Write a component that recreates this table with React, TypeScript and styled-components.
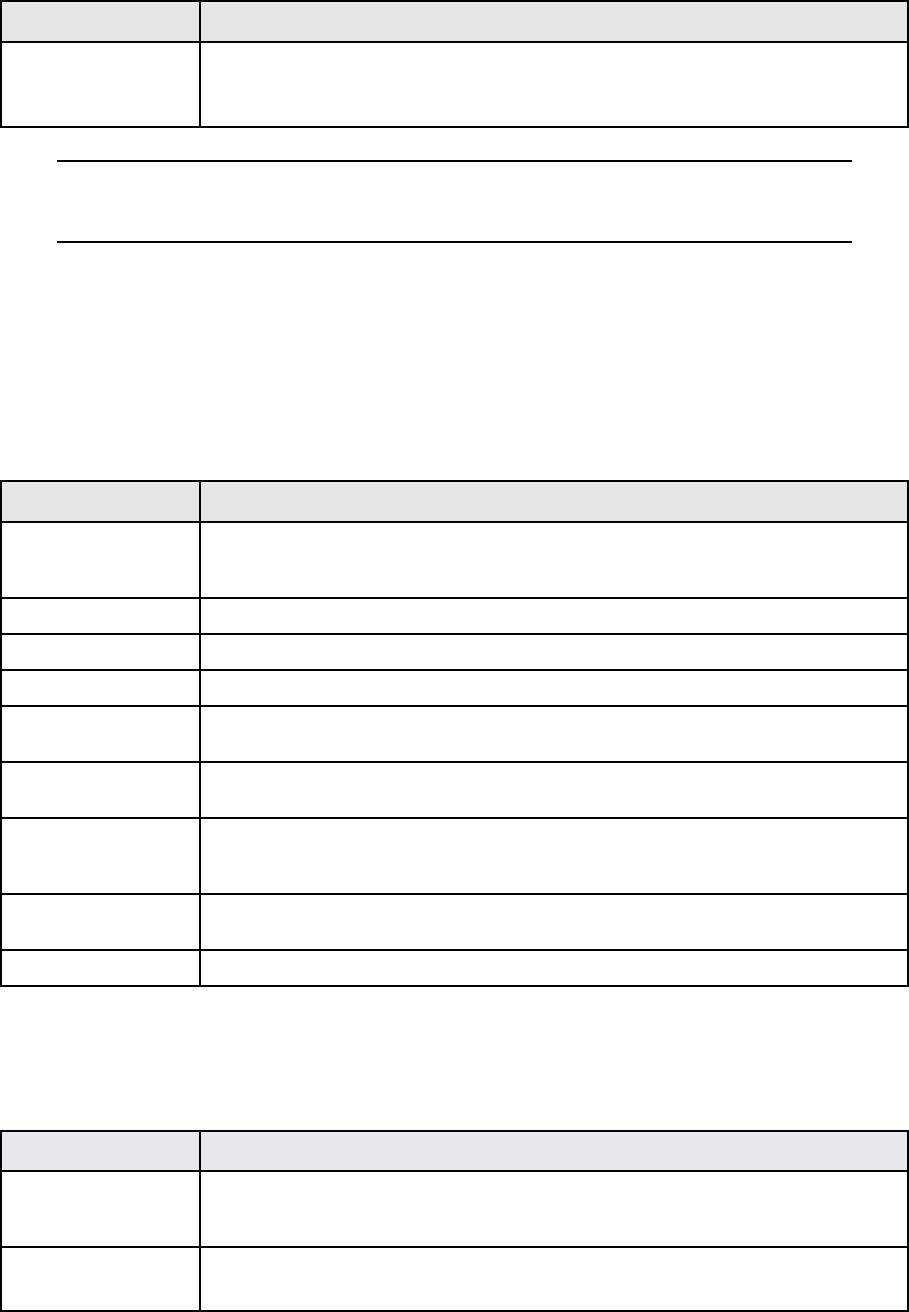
import React from 'react'
import styled, { createGlobalStyle } from 'styled-components'

interface TableSpec {
    header: number
    rows: number[]
    shade: string
}

const tables: TableSpec[] = [
    { header: 42, rows: [85], shade: '#e5e5e5' },
    { header: 42, rows: [76, 36, 36, 36, 56, 56, 76, 56, 36], shade: '#e5e5e5' },
    { header: 41, rows: [76, 64], shade: '#e8e8ec' },
]

const GlobalStyle = createGlobalStyle`
    html, body {
        margin: 0;
        padding: 0;
        background: #ffffff;
        font-family: "Liberation Sans", Arial, sans-serif;
    }
`

const Page = styled.div`
    width: 909px;
    display: flex;
    flex-direction: column;
`

const Table = styled.div<{ $gap: number }>`
    margin-top: ${({ $gap }) => $gap}px;
    display: grid;
    grid-template-columns: 199px 1fr;
    border-top: 2px solid #000;
    border-left: 2px solid #000;
    box-sizing: border-box;
    width: 909px;
`

const Cell = styled.div<{ $h: number; $shade?: string }>`
    box-sizing: border-box;
    height: ${({ $h }) => $h}px;
    border-right: 2px solid #000;
    border-bottom: 2px solid #000;
    background: ${({ $shade }) => $shade || '#ffffff'};
`

const Note = styled.div`
    margin: 32px 0 0 57px;
    width: 795px;
    height: 83px;
    box-sizing: border-box;
    border-top: 2px solid #000;
    border-bottom: 2px solid #000;
`

const DataTable: React.FC<{ spec: TableSpec; gap: number }> = ({ spec, gap }) => (
    <Table $gap={gap}>
        <Cell $h={spec.header - 1} $shade={spec.shade} />
        <Cell $h={spec.header - 1} $shade={spec.shade} />
        {spec.rows.map((h, i) => (
            <React.Fragment key={i}>
                <Cell $h={h} />
                <Cell $h={h} />
            </React.Fragment>
        ))}
    </Table>
)

export default function App() {
    return (
        <Page>
            <GlobalStyle />
            <DataTable spec={tables[0]} gap={0} />
            <Note />
            <DataTable spec={tables[1]} gap={237} />
            <DataTable spec={tables[2]} gap={143} />
        </Page>
    )
}
